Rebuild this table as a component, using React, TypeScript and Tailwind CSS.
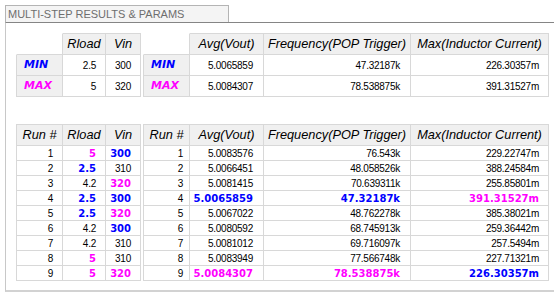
import React from "react";

type Tone = "plain" | "blue" | "pink";

type Val = { text: string; tone?: Tone };

const border = "border-[#d8d8d8]";

const runs: { rload: Val; vin: Val; avg: Val; freq: Val; max: Val }[] = [
  { rload: { text: "5", tone: "pink" }, vin: { text: "300", tone: "blue" }, avg: { text: "5.0083576" }, freq: { text: "76.543k" }, max: { text: "229.22747m" } },
  { rload: { text: "2.5", tone: "blue" }, vin: { text: "310" }, avg: { text: "5.0066451" }, freq: { text: "48.058526k" }, max: { text: "388.24584m" } },
  { rload: { text: "4.2" }, vin: { text: "320", tone: "pink" }, avg: { text: "5.0081415" }, freq: { text: "70.639311k" }, max: { text: "255.85801m" } },
  { rload: { text: "2.5", tone: "blue" }, vin: { text: "300", tone: "blue" }, avg: { text: "5.0065859", tone: "blue" }, freq: { text: "47.32187k", tone: "blue" }, max: { text: "391.31527m", tone: "pink" } },
  { rload: { text: "2.5", tone: "blue" }, vin: { text: "320", tone: "pink" }, avg: { text: "5.0067022" }, freq: { text: "48.762278k" }, max: { text: "385.38021m" } },
  { rload: { text: "4.2" }, vin: { text: "300", tone: "blue" }, avg: { text: "5.0080592" }, freq: { text: "68.745913k" }, max: { text: "259.36442m" } },
  { rload: { text: "4.2" }, vin: { text: "310" }, avg: { text: "5.0081012" }, freq: { text: "69.716097k" }, max: { text: "257.5494m" } },
  { rload: { text: "5", tone: "pink" }, vin: { text: "310" }, avg: { text: "5.0083949" }, freq: { text: "77.566748k" }, max: { text: "227.71321m" } },
  { rload: { text: "5", tone: "pink" }, vin: { text: "320", tone: "pink" }, avg: { text: "5.0084307", tone: "pink" }, freq: { text: "78.538875k", tone: "pink" }, max: { text: "226.30357m", tone: "blue" } },
];

function Cell({
  children,
  top,
  left,
  ghost,
  head,
  shade,
  className = "",
}: {
  children?: React.ReactNode;
  top?: boolean;
  left?: boolean;
  ghost?: boolean;
  head?: boolean;
  shade?: boolean;
  className?: string;
}) {
  return (
    <div
      className={`flex items-center overflow-hidden whitespace-nowrap border-r border-b ${border} ${
        top ? "border-t" : ""
      } ${left ? "border-l" : ""} ${ghost ? "border-t border-l border-t-transparent border-l-transparent" : ""} ${
        head || shade ? "bg-[#f0f0f0]" : ""
      } ${head ? "justify-center font-['Liberation_Sans',sans-serif] text-[12.75px] italic text-black" : ""} ${className}`}
    >
      {children}
    </div>
  );
}

function Num({ v, pr = "pr-[9px]" }: { v: Val; pr?: string }) {
  const bold = v.tone === "blue" || v.tone === "pink";
  return (
    <div className={`flex h-full w-full items-center justify-end ${pr}`}>
      <span
        className={
          bold
            ? `font-['DejaVu_Sans',sans-serif] text-[10px] font-bold ${v.tone === "blue" ? "text-[#0000ff]" : "text-[#ff00ff]"}`
            : "font-['Liberation_Sans',sans-serif] text-[10px] tracking-[-0.25px] text-black"
        }
      >
        {v.text}
      </span>
    </div>
  );
}

function Tag({ label }: { label: "MIN" | "MAX" }) {
  return (
    <span
      className={`pl-[7px] font-['DejaVu_Sans',sans-serif] text-[11px] font-bold italic ${
        label === "MIN" ? "text-[#0000ff]" : "text-[#ff00ff]"
      }`}
    >
      {label}
    </span>
  );
}

const leftCols = "grid-cols-[47px_43px_35px]";
const rightCols = "grid-cols-[47px_74px_147px_138px]";

export default function App() {
  const summary = [
    { label: "MIN" as const, rload: "2.5", vin: "300", avg: "5.0065859", freq: "47.32187k", max: "226.30357m" },
    { label: "MAX" as const, rload: "5", vin: "320", avg: "5.0084307", freq: "78.538875k", max: "391.31527m" },
  ];

  return (
    <div className="h-[298px] w-[554px] overflow-hidden bg-white pl-[5px] pt-[5px]">
      {/* tab */}
      <div className="flex h-[17px] w-[224px] items-center border-x border-t border-[#b4b4b4] bg-[#f4f4f4] pl-[2px] font-['Liberation_Sans',sans-serif] text-[11px] leading-none text-[#6e6e6e]">
        MULTI-STEP RESULTS &amp; PARAMS
      </div>

      <div className="border-t border-l border-b-2 border-t-[#858585] border-l-[#c8c8c8] border-b-[#d2d2d2] pb-[9px] pl-[10px] pt-[10px]">
        {/* summary tables */}
        <div className="flex gap-[2px]">
          <div className={`grid ${leftCols} grid-rows-[22px_21px_21px]`}>
            <Cell ghost />
            <Cell top head>Rload</Cell>
            <Cell top head>Vin</Cell>
            {summary.map((r) => (
              <React.Fragment key={r.label}>
                <Cell left shade>
                  <Tag label={r.label} />
                </Cell>
                <Cell>
                  <Num v={{ text: r.rload }} />
                </Cell>
                <Cell>
                  <Num v={{ text: r.vin }} />
                </Cell>
              </React.Fragment>
            ))}
          </div>

          <div className={`grid ${rightCols} grid-rows-[22px_21px_21px]`}>
            <Cell ghost />
            <Cell top head>Avg(Vout)</Cell>
            <Cell top head>Frequency(POP Trigger)</Cell>
            <Cell top head>Max(Inductor Current)</Cell>
            {summary.map((r) => (
              <React.Fragment key={r.label}>
                <Cell left shade>
                  <Tag label={r.label} />
                </Cell>
                <Cell>
                  <Num v={{ text: r.avg }} pr="pr-[10px]" />
                </Cell>
                <Cell>
                  <Num v={{ text: r.freq }} pr="pr-[10px]" />
                </Cell>
                <Cell>
                  <Num v={{ text: r.max }} />
                </Cell>
              </React.Fragment>
            ))}
          </div>
        </div>

        {/* per-run tables */}
        <div className="mt-[27px] flex gap-[2px]">
          <div className={`grid ${leftCols} grid-rows-[22px_repeat(9,15px)]`}>
            <Cell top left head>Run #</Cell>
            <Cell top head>Rload</Cell>
            <Cell top head>Vin</Cell>
            {runs.map((r, i) => (
              <React.Fragment key={i}>
                <Cell left>
                  <Num v={{ text: String(i + 1) }} />
                </Cell>
                <Cell>
                  <Num v={r.rload} />
                </Cell>
                <Cell>
                  <Num v={r.vin} />
                </Cell>
              </React.Fragment>
            ))}
          </div>

          <div className={`grid ${rightCols} grid-rows-[22px_repeat(9,15px)]`}>
            <Cell top left head>Run #</Cell>
            <Cell top head>Avg(Vout)</Cell>
            <Cell top head>Frequency(POP Trigger)</Cell>
            <Cell top head>Max(Inductor Current)</Cell>
            {runs.map((r, i) => (
              <React.Fragment key={i}>
                <Cell left>
                  <Num v={{ text: String(i + 1) }} pr="pr-[6px]" />
                </Cell>
                <Cell>
                  <Num v={r.avg} pr="pr-[10px]" />
                </Cell>
                <Cell>
                  <Num v={r.freq} pr="pr-[10px]" />
                </Cell>
                <Cell>
                  <Num v={r.max} />
                </Cell>
              </React.Fragment>
            ))}
          </div>
        </div>
      </div>
    </div>
  );
}
